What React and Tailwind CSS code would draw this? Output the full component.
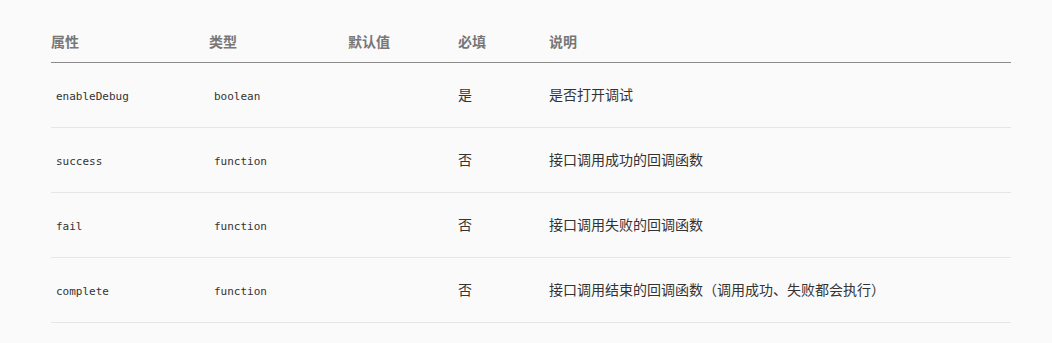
const rows = [
  { name: 'enableDebug', type: 'boolean', def: '', required: '是', desc: '是否打开调试' },
  { name: 'success', type: 'function', def: '', required: '否', desc: '接口调用成功的回调函数' },
  { name: 'fail', type: 'function', def: '', required: '否', desc: '接口调用失败的回调函数' },
  { name: 'complete', type: 'function', def: '', required: '否', desc: '接口调用结束的回调函数（调用成功、失败都会执行）' },
];

export default function App() {
  return (
    <div
      className="min-h-[343px] bg-[#fafafa] pl-[51px] pt-[21px]"
      style={{ fontFamily: '"Noto Sans", "Noto Sans CJK SC", sans-serif' }}
    >
      <table className="w-[960px] border-collapse text-[14px] table-fixed">
        <colgroup>
          <col className="w-[158px]" />
          <col className="w-[139px]" />
          <col className="w-[110px]" />
          <col className="w-[91px]" />
          <col />
        </colgroup>
        <thead>
          <tr className="border-b border-[#8a8a8a]">
            {['属性', '类型', '默认值', '必填', '说明'].map((h) => (
              <th key={h} className="h-[41px] p-0 text-left align-middle font-bold text-[#777777]">
                {h}
              </th>
            ))}
          </tr>
        </thead>
        <tbody>
          {rows.map((r) => (
            <tr key={r.name} className="border-b border-[#e6e6e6]">
              <td className="h-[65px] p-0 align-middle">
                <code className="px-[5px] text-[11px] text-[#333333]" style={{ fontFamily: '"DejaVu Sans Mono", monospace' }}>
                  {r.name}
                </code>
              </td>
              <td className="p-0 align-middle">
                <code className="px-[5px] text-[11px] text-[#333333]" style={{ fontFamily: '"DejaVu Sans Mono", monospace' }}>
                  {r.type}
                </code>
              </td>
              <td className="p-0 align-middle">{r.def}</td>
              <td className="p-0 align-middle text-[#333333]">{r.required}</td>
              <td className="p-0 align-middle text-[#333333]">{r.desc}</td>
            </tr>
          ))}
        </tbody>
      </table>
    </div>
  );
}
